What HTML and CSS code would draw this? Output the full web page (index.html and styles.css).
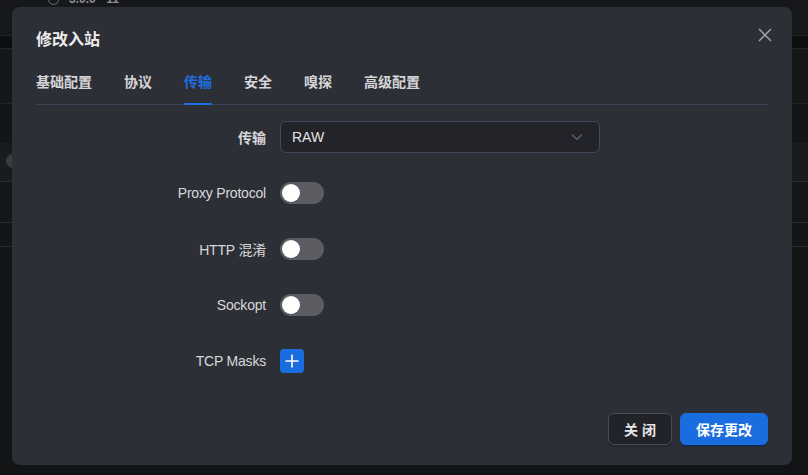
FILE: index.html
```html
<!DOCTYPE html>
<html lang="zh-CN">
<head>
<meta charset="utf-8">
<title>修改入站</title>
<link rel="stylesheet" href="styles.css">
</head>
<body>
<div class="page">
  <div class="bg-row bg-top">
    <div class="bg-meta"><span class="bg-ring"></span><span class="bg-meta-text">3.0.0 · 11</span></div>
  </div>
  <div class="bg-row bg-band"></div>
  <div class="bg-row bg-r1"></div>
  <div class="bg-row bg-r2"></div>
  <div class="bg-row bg-r3"><span class="bg-nav"></span></div>
  <div class="bg-row bg-r4"></div>
  <div class="bg-row bg-r5"></div>
  <div class="bg-rest"></div>
</div>

<div class="modal">
  <div class="modal-head">
    <h1 class="modal-title">修改入站</h1>
    <button class="modal-close" aria-label="关闭">
      <svg width="14" height="14" viewBox="0 0 14 14"><path d="M1 1 L13 13 M13 1 L1 13" stroke="#a2a3a8" stroke-width="1.5" fill="none"/></svg>
    </button>
  </div>

  <div class="tabs">
    <div class="tab">基础配置</div>
    <div class="tab">协议</div>
    <div class="tab tab-active">传输</div>
    <div class="tab">安全</div>
    <div class="tab">嗅探</div>
    <div class="tab">高级配置</div>
  </div>

  <div class="form">
    <div class="row">
      <div class="label">传输</div>
      <div class="select">
        <span class="select-value">RAW</span>
        <svg class="select-arrow" width="12" height="8" viewBox="0 0 12 8"><path d="M1 1.5 L6 6.5 L11 1.5" stroke="#5f6272" stroke-width="1.2" fill="none"/></svg>
      </div>
    </div>
    <div class="row">
      <div class="label label-en">Proxy Protocol</div>
      <div class="switch"><span class="knob"></span></div>
    </div>
    <div class="row">
      <div class="label label-en">HTTP 混淆</div>
      <div class="switch"><span class="knob"></span></div>
    </div>
    <div class="row">
      <div class="label label-en">Sockopt</div>
      <div class="switch"><span class="knob"></span></div>
    </div>
    <div class="row">
      <div class="label label-en">TCP Masks</div>
      <button class="plus" aria-label="添加">
        <svg width="14" height="14" viewBox="0 0 14 14"><path d="M7 0.5 V13.5 M0.5 7 H13.5" stroke="#ffffff" stroke-width="1.6" fill="none"/></svg>
      </button>
    </div>
  </div>

  <div class="footer">
    <button class="btn btn-default">关 闭</button>
    <button class="btn btn-primary">保存更改</button>
  </div>
</div>
</body>
</html>
```

FILE: styles.css
```css
* { box-sizing: border-box; }

html, body {
  margin: 0;
  padding: 0;
  width: 808px;
  height: 475px;
  overflow: hidden;
  background: #131416;
  font-family: "Liberation Sans", "Noto Sans CJK SC", sans-serif;
}

.page {
  display: flex;
  flex-direction: column;
  height: 475px;
}

.bg-row { flex: none; position: relative; }

.bg-top {
  height: 36px;
  background: #17181b;
  border-bottom: 1px solid #222327;
  overflow: hidden;
}

.bg-meta {
  display: flex;
  align-items: center;
  gap: 10px;
  margin-top: -8px;
  padding-left: 48px;
  height: 14px;
}

.bg-ring {
  width: 11px;
  height: 11px;
  border: 1.5px solid #6a6b70;
  border-radius: 50%;
}

.bg-meta-text {
  color: #8d8e94;
  font-size: 12px;
  font-weight: bold;
}

.bg-band {
  height: 13px;
  background: #0e0f11;
  border-bottom: 1px solid #25262a;
}

.bg-r1 {
  height: 55px;
  background: #161719;
  border-bottom: 1px solid #222327;
}

.bg-r2 {
  height: 39px;
  background: #141518;
}

.bg-r3 {
  height: 39px;
  background: #1a1b1e;
  border-bottom: 1px solid #2a2b30;
}

.bg-nav {
  position: absolute;
  left: 6px;
  top: 11px;
  width: 14px;
  height: 14px;
  border-radius: 50%;
  background: #3a3b40;
}

.bg-r4 {
  height: 41px;
  background: #151619;
  border-bottom: 1px solid #2a2b30;
}

.bg-r5 {
  height: 24px;
  background: #141518;
  border-bottom: 1px solid #2a2b30;
}

.bg-rest { flex: 1; background: #131416; }

/* Modal */
.modal {
  position: absolute;
  left: 12px;
  top: 7px;
  width: 780px;
  height: 458px;
  background: #2d2f37;
  border-radius: 8px;
  padding: 20px 24px 20px;
  display: flex;
  flex-direction: column;
}

.modal-head {
  display: flex;
  align-items: center;
  justify-content: space-between;
  height: 24px;
}

.modal-title {
  margin: 0;
  font-size: 16px;
  line-height: 24px;
  font-weight: bold;
  color: #ececec;
  position: relative;
  top: 1px;
}

.modal-close {
  border: 0;
  background: transparent;
  padding: 0;
  width: 16px;
  height: 16px;
  display: flex;
  align-items: center;
  justify-content: center;
  margin-right: -5px;
  margin-top: -8px;
}

.tabs {
  display: flex;
  gap: 32px;
  margin-top: 8px;
  border-bottom: 1px solid #404259;
}

.tab {
  position: relative;
  padding: 12px 0 11px;
  font-size: 14px;
  line-height: 22px;
  font-weight: bold;
  color: #d6d6d8;
}

.tab-active { color: #1f6fe0; }

.tab-active::after {
  content: "";
  position: absolute;
  left: 0;
  right: 0;
  bottom: -1px;
  height: 2px;
  background: #1f6fe0;
}

.form {
  display: flex;
  flex-direction: column;
  gap: 24px;
  margin-top: 16px;
}

.row {
  display: flex;
  align-items: center;
  gap: 14px;
  height: 32px;
}

.label {
  width: 230px;
  text-align: right;
  font-size: 14px;
  color: #d8d8da;
  font-weight: bold;
}

.label-en { font-weight: normal; letter-spacing: -0.2px; }

.select {
  width: 320px;
  height: 32px;
  background: #232429;
  border: 1px solid #44485d;
  border-radius: 6px;
  display: flex;
  align-items: center;
  justify-content: space-between;
  padding: 0 16px 0 11px;
}

.select-value {
  font-size: 14px;
  color: #e2e2e4;
}

.switch {
  position: relative;
  width: 44px;
  height: 22px;
  border-radius: 11px;
  background: #5c5d63;
}

.knob {
  position: absolute;
  left: 2px;
  top: 2px;
  width: 18px;
  height: 18px;
  border-radius: 50%;
  background: #ffffff;
}

.plus {
  width: 24px;
  height: 24px;
  border: 0;
  padding: 0;
  border-radius: 4px;
  background: #1a6ddf;
  display: flex;
  align-items: center;
  justify-content: center;
}

.footer {
  margin-top: auto;
  display: flex;
  justify-content: flex-end;
  gap: 8px;
}

.btn {
  height: 32px;
  border-radius: 6px;
  font-family: "Liberation Sans", "Noto Sans CJK SC", sans-serif;
  font-size: 14px;
  font-weight: bold;
  padding: 0 15px;
}

.btn-default {
  width: 64px;
  background: #222328;
  border: 1px solid #464a5d;
  color: #e6e6e8;
  box-shadow: 0 2px 0 rgba(0, 0, 0, 0.15);
}

.btn-primary {
  width: 88px;
  background: #1a6ddf;
  border: 1px solid #1a6ddf;
  color: #ffffff;
  box-shadow: 0 2px 0 rgba(10, 40, 90, 0.6);
}
```
